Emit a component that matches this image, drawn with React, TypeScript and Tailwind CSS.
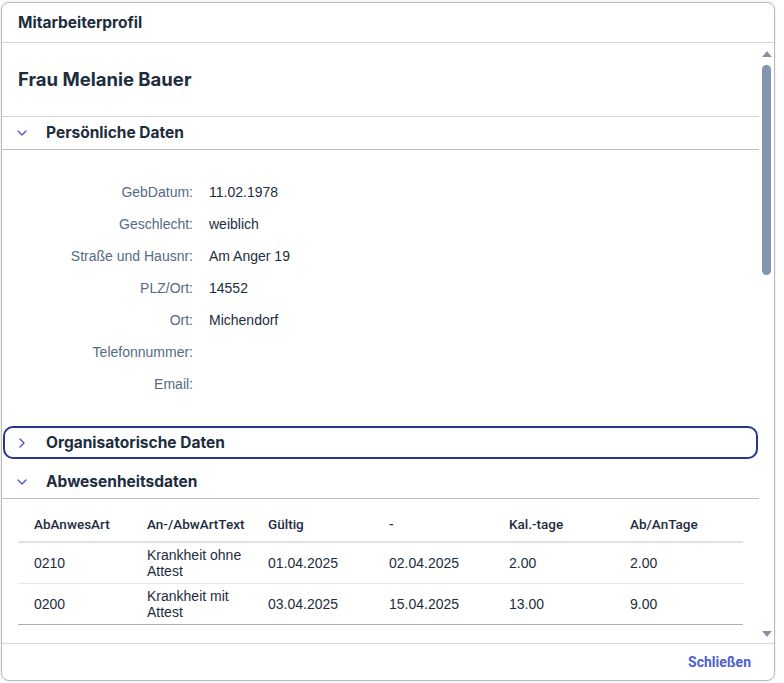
import React from "react";
import { ChevronDown, ChevronRight } from "lucide-react";

const heading = { fontFamily: "Inter, 'Noto Sans', sans-serif" };
const medium = { fontFamily: "Roboto, 'Noto Sans', sans-serif" };

const personal = [
  { label: "GebDatum:", value: "11.02.1978" },
  { label: "Geschlecht:", value: "weiblich" },
  { label: "Straße und Hausnr:", value: "Am Anger 19" },
  { label: "PLZ/Ort:", value: "14552" },
  { label: "Ort:", value: "Michendorf" },
  { label: "Telefonnummer:", value: "" },
  { label: "Email:", value: "" },
];

const absences = [
  { art: "0210", text: "Krankheit ohne Attest", from: "01.04.2025", to: "02.04.2025", kal: "2.00", ab: "2.00" },
  { art: "0200", text: "Krankheit mit Attest", from: "03.04.2025", to: "15.04.2025", kal: "13.00", ab: "9.00" },
];

const cols = "grid grid-cols-[113px_121px_121px_120px_121px_1fr]";

function SectionHeader({ title, open, focused }: { title: string; open: boolean; focused?: boolean }) {
  return (
    <div
      className={`flex h-[33px] items-center gap-[16px] ${
        focused ? "mx-[1px] rounded-[10px] border-2 border-[#283593] pl-[9px]" : "border-b border-[#b9bfc6] pl-[12px]"
      }`}
    >
      {open ? (
        <ChevronDown size={16} strokeWidth={2} className="shrink-0 text-[#4d55c8]" />
      ) : (
        <ChevronRight size={16} strokeWidth={2} className="shrink-0 text-[#4d55c8]" />
      )}
      <span className="text-[15.5px] font-bold text-[#1d2d3e]" style={heading}>
        {title}
      </span>
    </div>
  );
}

export default function App() {
  return (
    <div className="h-[683px] w-[784px] bg-white pl-[1px] pt-[2px]" style={{ fontFamily: "'Liberation Sans', Arial, sans-serif" }}>
      <div className="flex h-[679px] w-[774px] flex-col overflow-hidden rounded-[8px] border border-[#b8bcc2] bg-white shadow-[0_0_3px_rgba(0,0,0,0.12)]">
        {/* Header */}
        <div className="flex h-[40px] shrink-0 items-center border-b border-[#d5d9dd] px-[16px]">
          <span className="text-[15.5px] font-bold text-[#1d2d3e]" style={heading}>
            Mitarbeiterprofil
          </span>
        </div>

        {/* Content */}
        <div className="flex h-[600px] shrink-0">
          <div className="flex-1 overflow-hidden">
            <div className="flex h-[74px] items-center border-b border-[#d0d4d8] px-[16px]">
              <h1 className="text-[18.5px] font-bold text-[#1d2d3e]" style={heading}>
                Frau Melanie Bauer
              </h1>
            </div>

            <SectionHeader title="Persönliche Daten" open />
            <div className="pb-[26px] pt-[26px]">
              {personal.map((r) => (
                <div key={r.label} className="flex h-8 items-center text-[14px]">
                  <div className="w-[191px] text-right text-[#556b82]">{r.label}</div>
                  <div className="pl-[16px] text-[#1d2d3e]">{r.value}</div>
                </div>
              ))}
            </div>

            <SectionHeader title="Organisatorische Daten" open={false} focused />
            <div className="h-[7px]" />
            <SectionHeader title="Abwesenheitsdaten" open />

            {/* Table */}
            <div className="mx-[16px] mt-[8px] text-[14px] text-[#1d2d3e]">
              <div className={`${cols} h-[36px] items-center border-b-2 border-[#dfe2e5]`}>
                {["AbAnwesArt", "An-/AbwArtText", "Gültig", "-", "Kal.-tage", "Ab/AnTage"].map((h) => (
                  <div key={h} className="pl-4 text-[13.5px] font-medium" style={medium}>
                    {h}
                  </div>
                ))}
              </div>
              {absences.map((a, i) => (
                <div
                  key={a.art}
                  className={`${cols} h-[41px] items-center ${
                    i === absences.length - 1 ? "border-b border-[#a9b0b7]" : "border-b border-[#e5e7ea]"
                  }`}
                >
                  <div className="pl-4">{a.art}</div>
                  <div className="pl-4 pr-2 leading-4">{a.text}</div>
                  <div className="pl-4">{a.from}</div>
                  <div className="pl-4">{a.to}</div>
                  <div className="pl-4">{a.kal}</div>
                  <div className="pl-4">{a.ab}</div>
                </div>
              ))}
            </div>
          </div>

          {/* Scrollbar */}
          <div className="flex w-[15px] flex-col items-center pt-[8px] pb-[6px]">
            <svg width="10" height="6" viewBox="0 0 10 6" className="mb-[8px]">
              <polygon points="5,0 10,6 0,6" fill="#8493aa" />
            </svg>
            <div className="h-[210px] w-[9px] rounded-full bg-[#8396b0]" />
            <div className="flex-1" />
            <svg width="10" height="6" viewBox="0 0 10 6">
              <polygon points="0,0 10,0 5,6" fill="#8493aa" />
            </svg>
          </div>
        </div>

        {/* Footer */}
        <div className="flex flex-1 items-center justify-end border-t border-[#d5d9dd] pr-[23px]">
          <button className="text-[14px] font-bold text-[#4c5fcf]" style={medium}>
            Schließen
          </button>
        </div>
      </div>
    </div>
  );
}
